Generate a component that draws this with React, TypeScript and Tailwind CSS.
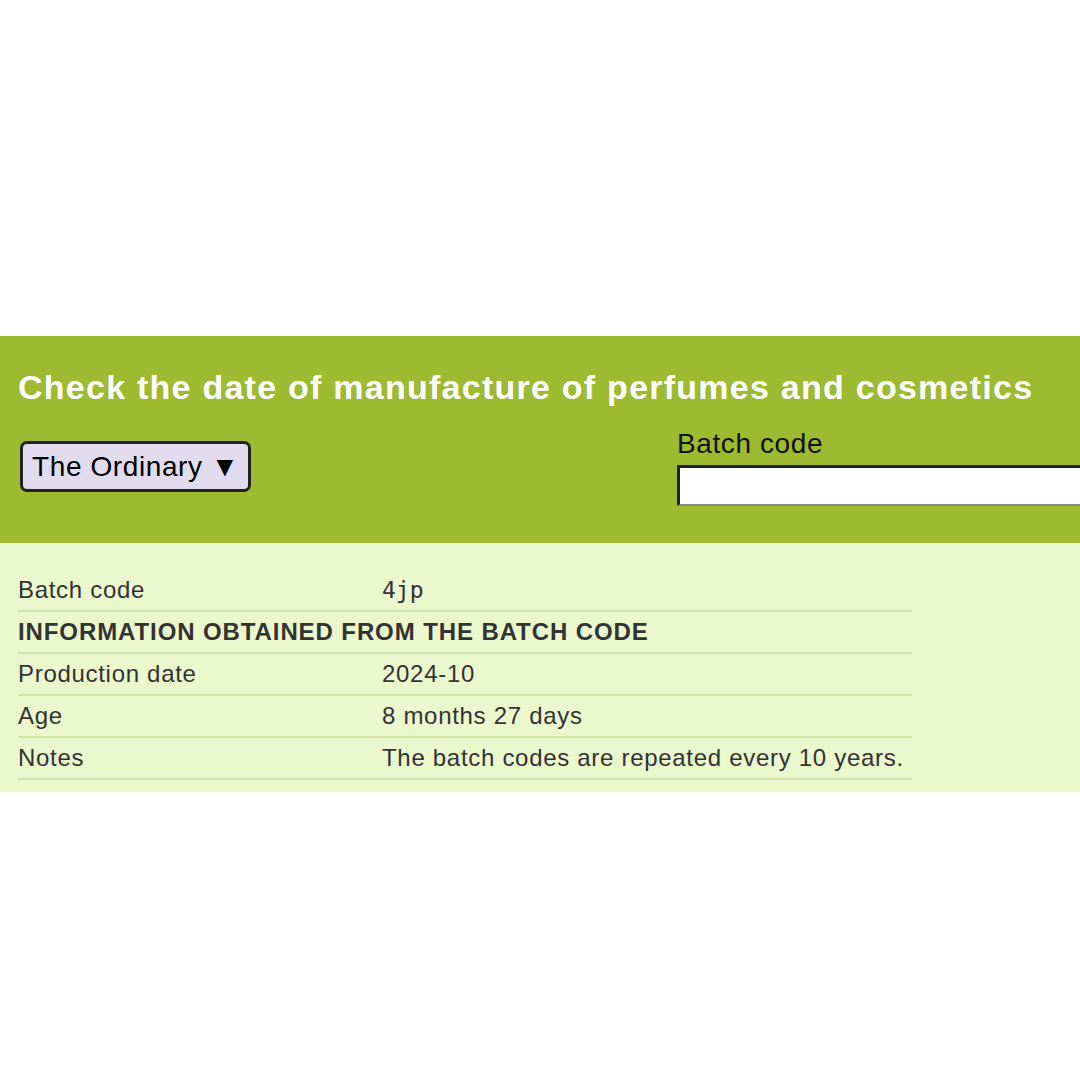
import React from "react";

const rows: { label: string; value: string; mono?: boolean; header?: boolean }[] = [
  { label: "Batch code", value: "4jp", mono: true },
  { label: "INFORMATION OBTAINED FROM THE BATCH CODE", value: "", header: true },
  { label: "Production date", value: "2024-10" },
  { label: "Age", value: "8 months 27 days" },
  { label: "Notes", value: "The batch codes are repeated every 10 years." },
];

export default function App() {
  return (
    <div className="w-[1080px] h-[1080px] bg-white overflow-hidden [font-family:'Liberation_Sans',Arial,sans-serif]">
      <div className="h-[336px]" />
      <div className="h-[207px] bg-[#9dba30] pl-[18px] pt-[30px] overflow-hidden">
        <h1 className="text-[34px] leading-[42px] tracking-[1.25px] font-bold text-white whitespace-nowrap">
          Check the date of manufacture of perfumes and cosmetics
        </h1>
        <div className="flex items-start mt-[4px]">
          <div className="shrink-0 mt-[29px] ml-[2px] w-[231px] h-[51px] rounded-[7px] border-[3px] border-[#222] bg-[#e0dced] flex items-center pl-[9px] text-[28px] tracking-[0.6px] text-black whitespace-nowrap">
            The Ordinary ▼
          </div>
          <div className="shrink-0 ml-[426px] flex flex-col">
            <div className="text-[28px] leading-[30px] tracking-[0.6px] text-[#111] mt-[17px] whitespace-nowrap">Batch code</div>
            <div className="mt-[6px] w-[420px] h-[41px] bg-white border-t-[3px] border-l-[3px] border-b-[2px] border-r-[2px] border-t-[#222] border-l-[#222] border-b-[#888] border-r-[#888]" />
          </div>
        </div>
      </div>
      <div className="h-[249px] bg-[#ebf7cc] pl-[18px] pt-[27px]">
        <div className="w-[894px]">
          {rows.map((r, i) => (
            <div
              key={i}
              className="flex h-[42px] items-center border-b-[2px] border-[#d5e4a6] text-[24px] tracking-[0.7px] text-[#333]"
            >
              {r.header ? (
                <div className="font-bold whitespace-nowrap tracking-[0.9px]">{r.label}</div>
              ) : (
                <>
                  <div className="w-[364px] whitespace-nowrap">{r.label}</div>
                  <div className={r.mono ? "[font-family:'DejaVu_Sans_Mono',monospace] text-[23px] tracking-normal" : "whitespace-nowrap"}>{r.value}</div>
                </>
              )}
            </div>
          ))}
        </div>
      </div>
    </div>
  );
}
